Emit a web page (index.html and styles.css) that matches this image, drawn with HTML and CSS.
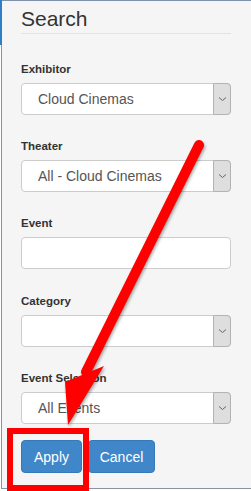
FILE: index.html
```html
<!DOCTYPE html>
<html>
<head>
<meta charset="utf-8">
<link rel="stylesheet" href="styles.css">
</head>
<body>
<div class="page">
  <div class="edge"><div class="edge-blue"></div></div>
  <div class="panel">
    <h2 class="title">Search</h2>
    <div class="rule"></div>
    <div class="group first">
      <label class="lbl">Exhibitor</label>
      <div class="select"><span class="val">Cloud Cinemas</span><span class="caret"><svg width="9" height="6" viewBox="0 0 9 6"><path d="M1 1.5 L4.5 4.5 L8 1.5" fill="none" stroke="#666" stroke-width="1"/></svg></span></div>
    </div>
    <div class="group">
      <label class="lbl">Theater</label>
      <div class="select"><span class="val">All - Cloud Cinemas</span><span class="caret"><svg width="9" height="6" viewBox="0 0 9 6"><path d="M1 1.5 L4.5 4.5 L8 1.5" fill="none" stroke="#666" stroke-width="1"/></svg></span></div>
    </div>
    <div class="group wide">
      <label class="lbl">Event</label>
      <div class="input"></div>
    </div>
    <div class="group">
      <label class="lbl">Category</label>
      <div class="select"><span class="val"></span><span class="caret"><svg width="9" height="6" viewBox="0 0 9 6"><path d="M1 1.5 L4.5 4.5 L8 1.5" fill="none" stroke="#666" stroke-width="1"/></svg></span></div>
    </div>
    <div class="group last">
      <label class="lbl">Event Selection</label>
      <div class="select"><span class="val">All Events</span><span class="caret"><svg width="9" height="6" viewBox="0 0 9 6"><path d="M1 1.5 L4.5 4.5 L8 1.5" fill="none" stroke="#666" stroke-width="1"/></svg></span></div>
    </div>
    <div class="actions">
      <button class="btn apply">Apply</button>
      <button class="btn cancel">Cancel</button>
    </div>
  </div>
  <svg class="overlay" width="251" height="491" viewBox="0 0 251 491">
    <g class="arrow">
      <line x1="199" y1="145" x2="86" y2="372" stroke="#ff0000" stroke-width="10" stroke-linecap="round"/>
      <polygon points="65,382 104,366 68,425" fill="#ff0000"/>
    </g>
    <rect x="10" y="431" width="76" height="57" fill="none" stroke="#ff0000" stroke-width="6"/>
  </svg>
</div>
</body>
</html>
```

FILE: styles.css
```css
* { box-sizing: border-box; }
html, body { margin: 0; padding: 0; background: #ffffff; }
body { font-family: "Liberation Sans", Arial, sans-serif; }
.page {
  position: relative;
  width: 251px;
  height: 491px;
  display: flex;
  align-items: flex-start;
}
.edge {
  width: 2px;
  height: 489px;
  background: linear-gradient(to right, #ffffff 1px, #8994a3 1px);
  flex: none;
}
.edge-blue {
  height: 45px;
  background: #2f7fc8;
}
.panel {
  flex: 1;
  height: 489px;
  background: #f5f5f5;
  border-top: 1px solid #7f90ac;
  border-bottom: 1px solid #8994a3;
  padding: 6px 20px 0 19px;
}
.title {
  margin: 0;
  font-size: 21px;
  line-height: 24px;
  font-weight: normal;
  color: #333333;
}
.rule {
  margin-top: 2px;
  height: 1px;
  background: #e3e3e3;
}
.group { margin-bottom: 24px; }
.group.first { margin-top: 28px; }
.group.wide { margin-bottom: 25px; }
.group.last { margin-bottom: 16px; }
.lbl {
  display: block;
  font-size: 11.5px;
  line-height: 14px;
  font-weight: bold;
  color: #333333;
  margin-bottom: 7px;
}
.select, .input {
  height: 32px;
  border: 1px solid #cccccc;
  border-radius: 4px;
  background: #ffffff;
}
.select {
  display: flex;
  align-items: stretch;
}
.val {
  flex: 1;
  font-size: 14px;
  line-height: 30px;
  color: #555555;
  padding-left: 16px;
  white-space: nowrap;
}
.caret {
  width: 18px;
  margin: -1px -1px -1px 0;
  background: #dedede;
  border: 1px solid #b3b3b3;
  border-radius: 0 4px 4px 0;
  display: flex;
  align-items: center;
  justify-content: center;
}
.caret svg { display: block; }
.actions {
  display: flex;
  gap: 6px;
}
.btn {
  height: 33px;
  padding: 0;
  font-family: "Liberation Sans", Arial, sans-serif;
  font-size: 14px;
  color: #ffffff;
  background: #3f87c9;
  border: 1px solid #3579b8;
  border-radius: 4px;
}
.apply { width: 61px; }
.cancel { width: 67px; }
.overlay {
  position: absolute;
  left: 0;
  top: 0;
  pointer-events: none;
}
.arrow { filter: drop-shadow(1px 2px 1.5px rgba(0,0,0,0.35)); }
```
